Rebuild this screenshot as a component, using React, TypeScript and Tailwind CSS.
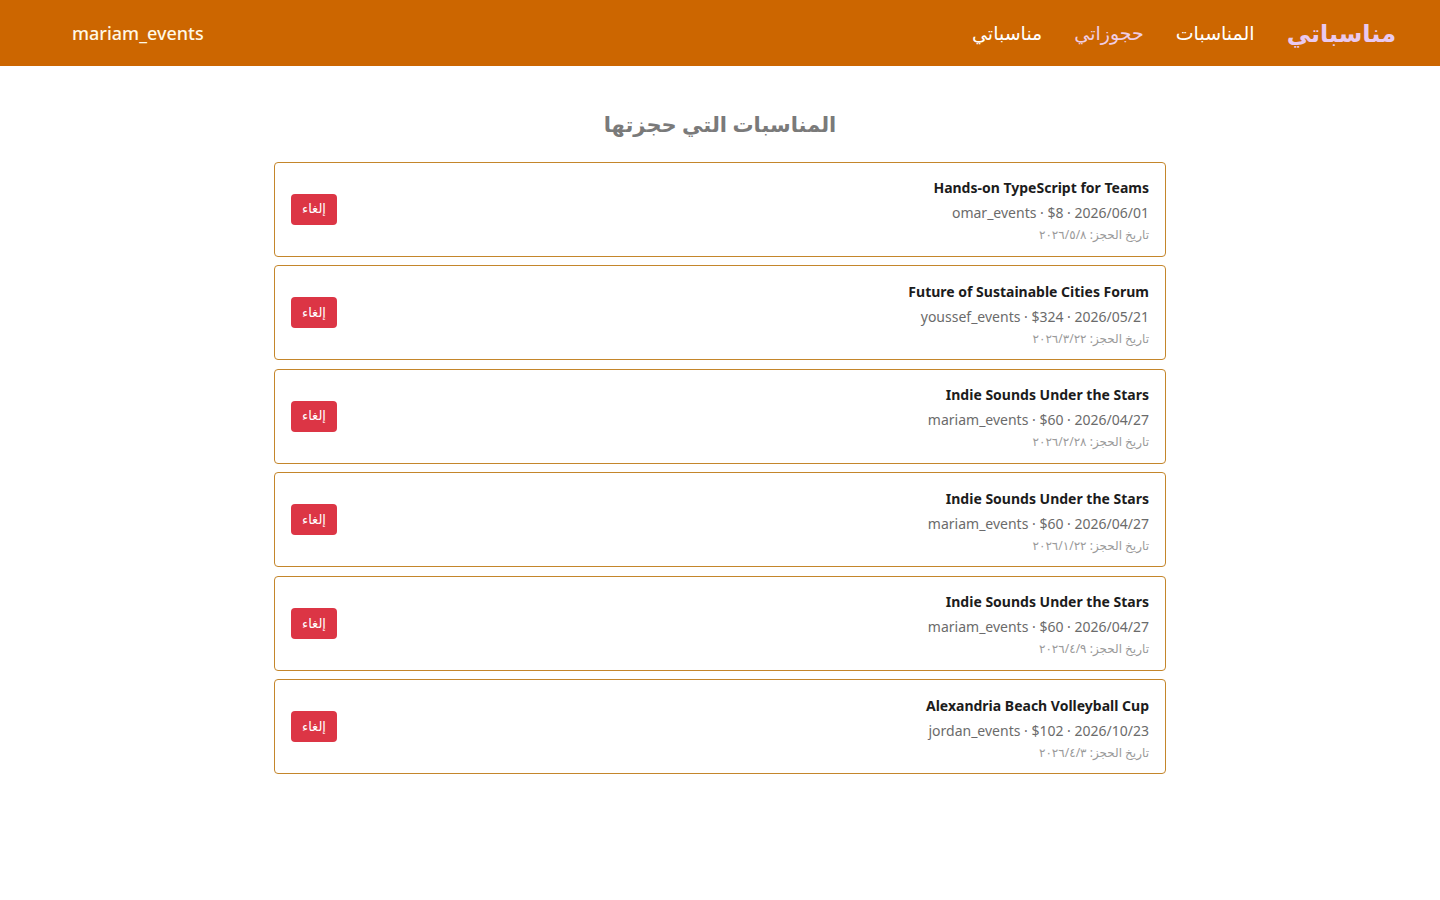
import React from "react";

type Booking = {
  id: number;
  title: string;
  organizer: string;
  price: number;
  eventDate: string;
  bookedAt: string;
};

const RLM = "\u200f";

const bookings: Booking[] = [
  { id: 1, title: "Hands-on TypeScript for Teams", organizer: "omar_events", price: 8, eventDate: "2026/06/01", bookedAt: `٨${RLM}/٥${RLM}/٢٠٢٦` },
  { id: 2, title: "Future of Sustainable Cities Forum", organizer: "youssef_events", price: 324, eventDate: "2026/05/21", bookedAt: `٢٢${RLM}/٣${RLM}/٢٠٢٦` },
  { id: 3, title: "Indie Sounds Under the Stars", organizer: "mariam_events", price: 60, eventDate: "2026/04/27", bookedAt: `٢٨${RLM}/٢${RLM}/٢٠٢٦` },
  { id: 4, title: "Indie Sounds Under the Stars", organizer: "mariam_events", price: 60, eventDate: "2026/04/27", bookedAt: `٢٢${RLM}/١${RLM}/٢٠٢٦` },
  { id: 5, title: "Indie Sounds Under the Stars", organizer: "mariam_events", price: 60, eventDate: "2026/04/27", bookedAt: `٩${RLM}/٤${RLM}/٢٠٢٦` },
  { id: 6, title: "Alexandria Beach Volleyball Cup", organizer: "jordan_events", price: 102, eventDate: "2026/10/23", bookedAt: `٣${RLM}/٤${RLM}/٢٠٢٦` },
];

export default function App() {
  return (
    <div
      dir="rtl"
      className="min-h-screen bg-white"
      style={{ fontFamily: '"Noto Sans", "DejaVu Sans", sans-serif' }}
    >
      {/* Navbar */}
      <header className="h-[66px] bg-[#cc6600] flex items-center justify-between px-[44px]">
        <nav className="flex items-center gap-8">
          <a href="#" className="text-[24px] font-bold text-[#e9c9ef] leading-none">مناسباتي</a>
          <a href="#" className="text-[19px] text-white leading-none">المناسبات</a>
          <a href="#" className="text-[19px] text-[#f0cde4] leading-none">حجوزاتي</a>
          <a href="#" className="text-[19px] text-white leading-none">مناسباتي</a>
        </nav>
        <span dir="ltr" className="text-[18px] font-medium text-[#fff8e6] pl-[28px]">mariam_events</span>
      </header>

      <main className="max-w-[892px] mx-auto pt-[43px]">
        <h2 className="text-center text-[21px] font-bold text-[#7a7a7a] mb-[21px]">المناسبات التي حجزتها</h2>

        <div className="flex flex-col gap-[8.6px]">
          {bookings.map((b) => (
            <div
              key={b.id}
              className="h-[95px] border border-[#c4862b] rounded-[4px] flex items-center justify-between px-[16px]"
            >
              <div className="flex flex-col items-start pt-[4px]">
                <div dir="ltr" className="text-[14px] font-bold text-[#1c1c1c] leading-[20px]">{b.title}</div>
                <div dir="ltr" className="text-[14px] text-[#6b6b6b] leading-[20px] mt-[5px]">
                  {b.organizer} · ${b.price} · {b.eventDate}
                </div>
                <div className="text-[12px] text-[#9a9a9a] leading-[18px] mt-[3px]">
                  تاريخ الحجز: {b.bookedAt}
                </div>
              </div>
              <button className="bg-[#dc3545] text-white text-[13px] rounded-[4px] w-[46px] h-[31px] flex items-center justify-center">
                إلغاء
              </button>
            </div>
          ))}
        </div>
      </main>
    </div>
  );
}
